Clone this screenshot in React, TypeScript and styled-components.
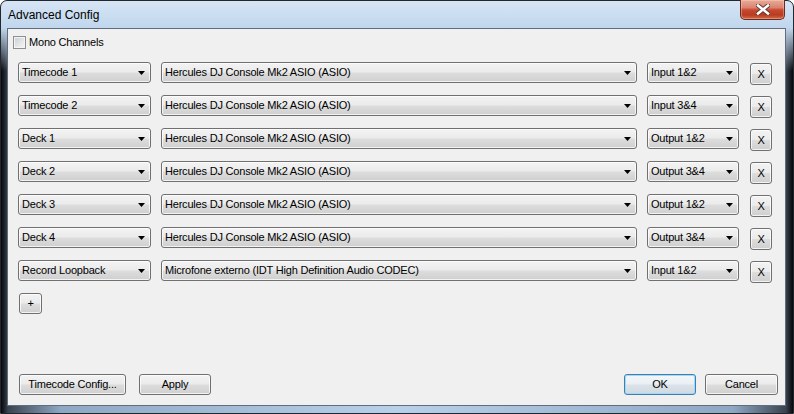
import React from "react";
import styled, { createGlobalStyle } from "styled-components";

const GlobalStyle = createGlobalStyle`
  html, body {
    margin: 0;
    padding: 0;
    background: #ffffff;
  }
  body {
    width: 794px;
    height: 414px;
    overflow: hidden;
    font-family: "Liberation Sans", Arial, sans-serif;
  }
`;

const Window = styled.div`
  box-sizing: border-box;
  width: 794px;
  height: 414px;
  display: flex;
  flex-direction: column;
  padding: 0 7px 7px 6px;
  border: 1px solid #22272e;
  border-radius: 7px 7px 0 0;
  background:
    linear-gradient(to bottom, #d6e5f5 0, #c0d6ed 27px, rgba(190, 212, 236, 0) 70px) top / 100% 70px no-repeat,
    linear-gradient(
      to right,
      #06080b 0,
      #1c2027 3px,
      #3a434f 7px,
      #8ea8c4 60px,
      #b9d0e9 50%,
      #8ea8c4 calc(100% - 60px),
      #3a434f calc(100% - 7px),
      #1c2027 calc(100% - 3px),
      #06080b 100%
    );
`;

const TitleBar = styled.div`
  height: 27px;
  display: flex;
  align-items: flex-start;
  justify-content: space-between;
  padding-left: 1px;
`;

const TitleText = styled.div`
  padding-top: 6px;
  font-size: 12px;
  line-height: 16px;
  color: #000;
`;

const CloseButton = styled.div`
  box-sizing: border-box;
  width: 45px;
  height: 20px;
  margin-top: -1px;
  margin-right: 1px;
  display: flex;
  align-items: center;
  justify-content: center;
  border: 1px solid #6b2a20;
  border-top: none;
  border-radius: 0 0 5px 5px;
  background: linear-gradient(
    to bottom,
    #e9ab98 0,
    #d98471 40%,
    #c8492f 52%,
    #b93b22 78%,
    #d46a45 100%
  );
  box-shadow: inset 0 0 0 1px rgba(255, 220, 205, 0.35);
`;

const Client = styled.div`
  flex: 1;
  display: flex;
  flex-direction: column;
  border: 1px solid #5f6d7e;
  background: #f0f0f0;
  font-size: 11px;
  letter-spacing: -0.2px;
  color: #000;
`;

const CheckRow = styled.label`
  display: flex;
  align-items: center;
  gap: 3px;
  margin: 6px 0 0 5px;
  height: 14px;
`;

const CheckBox = styled.span`
  box-sizing: border-box;
  width: 13px;
  height: 13px;
  border: 1px solid #8e8f8f;
  background: linear-gradient(135deg, #c9ccd1 0, #e4e5e7 55%, #f7f7f7 100%);
  box-shadow: inset 0 0 0 1px #f4f4f4;
`;

const RowList = styled.div`
  display: flex;
  flex-direction: column;
  gap: 12px;
  margin-top: 13px;
  padding-left: 10px;
`;

const Row = styled.div`
  display: flex;
  align-items: flex-start;
  height: 21px;
`;

const winButtonFace = `
  background: linear-gradient(
    to bottom,
    #f3f3f3 0,
    #ebebeb 48%,
    #dddddd 52%,
    #cfcfcf 100%
  );
`;

const Combo = styled.div<{ $w: number; $gap: number }>`
  box-sizing: border-box;
  width: ${(p) => p.$w}px;
  height: 21px;
  margin-right: ${(p) => p.$gap}px;
  display: flex;
  align-items: center;
  justify-content: space-between;
  padding: 0 5px 0 3px;
  border: 1px solid #707070;
  border-radius: 3px;
  ${winButtonFace}
  box-shadow: inset 0 0 0 1px rgba(255, 255, 255, 0.75);
  white-space: nowrap;
`;

const ComboText = styled.span`
  line-height: 19px;
`;

const Button = styled.div<{
  $w: number;
  $h?: number;
  $primary?: boolean;
  $top?: number;
  $left?: number;
}>`
  box-sizing: border-box;
  width: ${(p) => p.$w}px;
  height: ${(p) => p.$h ?? 21}px;
  margin-top: ${(p) => p.$top ?? 0}px;
  margin-left: ${(p) => p.$left ?? 0}px;
  display: flex;
  align-items: center;
  justify-content: center;
  border: 1px solid ${(p) => (p.$primary ? "#3c7fb1" : "#707070")};
  border-radius: 3px;
  ${(p) =>
    p.$primary
      ? `background: linear-gradient(to bottom, #f2f7fa 0, #e9eff3 48%, #dbe3e9 52%, #cfd9e0 100%);
         box-shadow: inset 0 0 0 1px #a6d8f5;`
      : `${winButtonFace}
         box-shadow: inset 0 0 0 1px rgba(255, 255, 255, 0.75);`}
  line-height: 19px;
  white-space: nowrap;
`;

const Spacer = styled.div`
  flex: 1;
`;

const Footer = styled.div`
  display: flex;
  align-items: center;
  justify-content: space-between;
  padding: 0 7px 10px 11px;
`;

const ButtonGroup = styled.div<{ $gap: number }>`
  display: flex;
  gap: ${(p) => p.$gap}px;
`;

const Arrow = () => (
  <svg width="7" height="4" viewBox="0 0 7 4">
    <polygon points="0,0 7,0 3.5,4" fill="#000" />
  </svg>
);

const DropDown: React.FC<{ label: string; w: number; gap: number }> = ({ label, w, gap }) => (
  <Combo $w={w} $gap={gap}>
    <ComboText>{label}</ComboText>
    <Arrow />
  </Combo>
);

const rows = [
  ["Timecode 1", "Hercules DJ Console Mk2 ASIO (ASIO)", "Input 1&2"],
  ["Timecode 2", "Hercules DJ Console Mk2 ASIO (ASIO)", "Input 3&4"],
  ["Deck 1", "Hercules DJ Console Mk2 ASIO (ASIO)", "Output 1&2"],
  ["Deck 2", "Hercules DJ Console Mk2 ASIO (ASIO)", "Output 3&4"],
  ["Deck 3", "Hercules DJ Console Mk2 ASIO (ASIO)", "Output 1&2"],
  ["Deck 4", "Hercules DJ Console Mk2 ASIO (ASIO)", "Output 3&4"],
  ["Record Loopback", "Microfone externo (IDT High Definition Audio CODEC)", "Input 1&2"],
];

export default function App() {
  return (
    <>
      <GlobalStyle />
      <Window>
        <TitleBar>
          <TitleText>Advanced Config</TitleText>
          <CloseButton>
            <svg width="14" height="11" viewBox="0 0 14 11">
              <path d="M2 1.5 L12 9.5 M12 1.5 L2 9.5" stroke="#5a3630" strokeWidth="4.4" strokeLinecap="square" />
              <path d="M2 1.5 L12 9.5 M12 1.5 L2 9.5" stroke="#ffffff" strokeWidth="2.6" strokeLinecap="square" />
            </svg>
          </CloseButton>
        </TitleBar>
        <Client>
          <CheckRow>
            <CheckBox />
            <span>Mono Channels</span>
          </CheckRow>
          <RowList>
            {rows.map(([role, device, channel], i) => (
              <Row key={i}>
                <DropDown label={role} w={133} gap={10} />
                <DropDown label={device} w={476} gap={10} />
                <DropDown label={channel} w={92} gap={11} />
                <Button $w={22} $h={22} $top={1}>X</Button>
              </Row>
            ))}
            <Row>
              <Button $w={23} $left={1}>+</Button>
            </Row>
          </RowList>
          <Spacer />
          <Footer>
            <ButtonGroup $gap={13}>
              <Button $w={107}>Timecode Config...</Button>
              <Button $w={72}>Apply</Button>
            </ButtonGroup>
            <ButtonGroup $gap={9}>
              <Button $w={72} $primary>OK</Button>
              <Button $w={73}>Cancel</Button>
            </ButtonGroup>
          </Footer>
        </Client>
      </Window>
    </>
  );
}
